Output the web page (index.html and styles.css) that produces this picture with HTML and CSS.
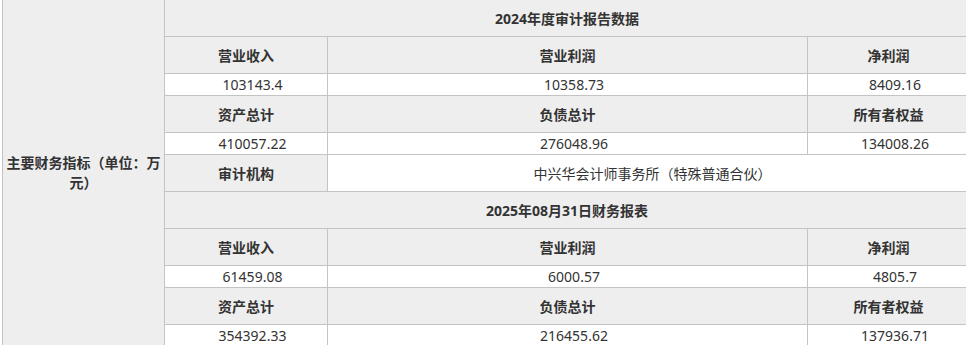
FILE: index.html
```html
<!DOCTYPE html>
<html lang="zh-CN">
<head>
<meta charset="utf-8">
<title>主要财务指标</title>
<link rel="stylesheet" href="styles.css">
</head>
<body>
<div class="page">
  <div class="fin">
    <div class="cell head side">主要财务指标（单位：万元）</div>

    <div class="cell head title span3">2024年度审计报告数据</div>
    <div class="cell head">营业收入</div>
    <div class="cell head">营业利润</div>
    <div class="cell head">净利润</div>
    <div class="cell val">103143.4</div>
    <div class="cell val">10358.73</div>
    <div class="cell val">8409.16</div>
    <div class="cell head">资产总计</div>
    <div class="cell head">负债总计</div>
    <div class="cell head">所有者权益</div>
    <div class="cell val">410057.22</div>
    <div class="cell val">276048.96</div>
    <div class="cell val">134008.26</div>
    <div class="cell head">审计机构</div>
    <div class="cell val span2 org">中兴华会计师事务所（特殊普通合伙）</div>

    <div class="cell head title span3">2025年08月31日财务报表</div>
    <div class="cell head">营业收入</div>
    <div class="cell head">营业利润</div>
    <div class="cell head">净利润</div>
    <div class="cell val">61459.08</div>
    <div class="cell val">6000.57</div>
    <div class="cell val">4805.7</div>
    <div class="cell head">资产总计</div>
    <div class="cell head">负债总计</div>
    <div class="cell head">所有者权益</div>
    <div class="cell val">354392.33</div>
    <div class="cell val">216455.62</div>
    <div class="cell val">137936.71</div>
  </div>
</div>
</body>
</html>
```

FILE: styles.css
```css
html, body {
  margin: 0;
  padding: 0;
  background: #ffffff;
}
body {
  font-family: "Noto Sans", "Noto Sans CJK SC", sans-serif;
  font-size: 14px;
  color: #333333;
  overflow: hidden;
}
.page {
  padding-left: 2px;
}
.fin {
  display: grid;
  width: 968px;
  box-sizing: border-box;
  grid-template-columns: 161px 162px 479px 161px;
  grid-template-rows: 36px 36px 21px 36px 21px 36px 36px 36px 21px 36px 21px;
  gap: 1px;
  padding: 0 1px 1px 1px;
  background: #c4c4c4;
}
.cell {
  display: flex;
  align-items: center;
  justify-content: center;
  text-align: center;
  line-height: 20px;
  padding-top: 2px;
  box-sizing: border-box;
}
.head {
  background: #eeeeee;
  font-weight: bold;
}
.val {
  background: #ffffff;
  padding-left: 13px;
  padding-top: 1px;
}
.org {
  padding-left: 8px;
}
.side {
  grid-row: 1 / span 11;
  grid-column: 1;
  padding: 0 3px;
}
.span3 {
  grid-column: 2 / span 3;
}
.span2 {
  grid-column: 3 / span 2;
}
```
